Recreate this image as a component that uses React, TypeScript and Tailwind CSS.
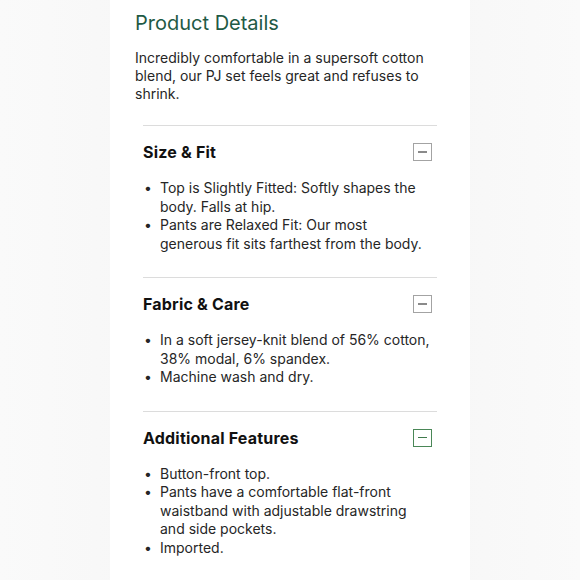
import React from "react";

const sections = [
  {
    title: "Size & Fit",
    active: false,
    items: [
      "Top is Slightly Fitted: Softly shapes the body. Falls at hip.",
      "Pants are Relaxed Fit: Our most generous fit sits farthest from the body.",
    ],
  },
  {
    title: "Fabric & Care",
    active: false,
    items: [
      "In a soft jersey-knit blend of 56% cotton, 38% modal, 6% spandex.",
      "Machine wash and dry.",
    ],
  },
  {
    title: "Additional Features",
    active: true,
    items: [
      "Button-front top.",
      "Pants have a comfortable flat-front waistband with adjustable drawstring and side pockets.",
      "Imported.",
    ],
  },
];

function MinusBox({ active }: { active: boolean }) {
  return (
    <div
      className={
        active
          ? "flex h-[18px] w-[19px] items-center justify-center border border-[#4a8757]"
          : "flex h-[18px] w-[19px] items-center justify-center border border-[#a3a3a3]"
      }
    >
      <div className={active ? "h-[1.5px] w-[9px] bg-[#3f7a4c]" : "h-[1.5px] w-[9px] bg-[#8a8a8a]"} />
    </div>
  );
}

export default function App() {
  return (
    <div
      className="flex min-h-[580px] w-full justify-center bg-gradient-to-r from-[#fafafa] via-[#f4f4f4] to-[#fafafa]"
      style={{ fontFamily: "Inter, 'Open Sans', Arial, sans-serif" }}
    >
      <div className="w-[360px] bg-white pb-6 pt-[11px]">
        <div className="px-[25px]">
          <h2 className="text-[20px] font-normal leading-[24px] text-[#1f5a45]">Product Details</h2>
          <p className="mt-[14px] text-[14px] leading-[18px] text-[#262626]">
            Incredibly comfortable in a supersoft cotton blend, our PJ set feels great and refuses to shrink.
          </p>
        </div>

        <div className="mt-[22px] px-[33px]">
          {sections.map((s) => (
            <div key={s.title} className="border-t border-[#dcdcdc] pb-[24px] pt-[16px]">
              <div className="flex h-[20px] items-center justify-between pr-[5px]">
                <h3 className="text-[16px] font-bold leading-[20px] tracking-[0.2px] text-[#111]">{s.title}</h3>
                <MinusBox active={s.active} />
              </div>
              <ul className="mt-[17px] pr-[6px]">
                {s.items.map((it) => (
                  <li key={it} className="flex text-[14px] leading-[18.5px] text-[#262626]">
                    <span className="w-[17px] shrink-0 pl-[1px]">•</span>
                    <span>{it}</span>
                  </li>
                ))}
              </ul>
            </div>
          ))}
        </div>
      </div>
    </div>
  );
}
